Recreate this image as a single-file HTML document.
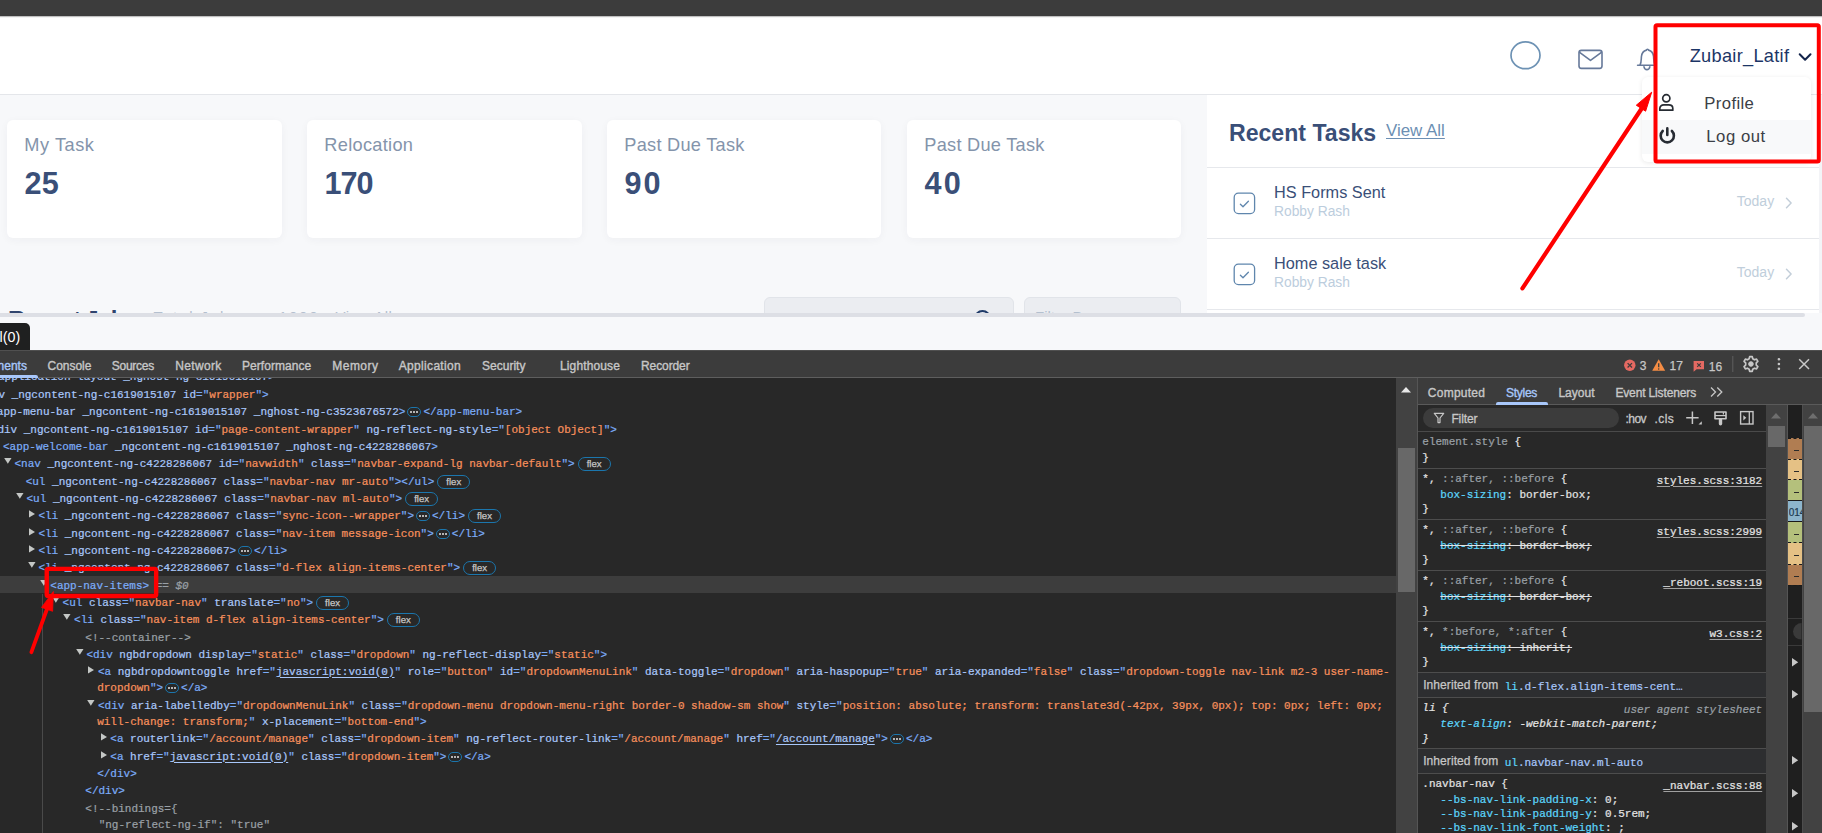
<!DOCTYPE html><html><head><meta charset="utf-8"><title>recreation</title><style>
*{box-sizing:border-box}
html,body{margin:0;padding:0}
body{width:1822px;height:833px;overflow:hidden;position:relative;background:#f7f8fa;font-family:"Liberation Sans",sans-serif}
.abs{position:absolute}
#page{position:absolute;left:0;top:0;width:1822px;height:350px;overflow:hidden;background:#f7f8fa}
#dt{position:absolute;left:0;top:350px;width:1822px;height:483px;overflow:hidden;background:#282828}
.card{position:absolute;top:120px;height:118px;background:#fff;border-radius:6px;box-shadow:0 2px 8px rgba(40,50,80,.045)}
.t{color:#7cacf8}.n{color:#a8c7fa}.v{color:#f8905c}.c{color:#9aa0a6}.w{color:#e3e3e3}
.u{text-decoration:underline;text-decoration-thickness:1px;text-underline-offset:1.5px}
.sl .u{text-decoration-color:#a0a0a0}
.dl{position:absolute;white-space:pre;font:400 11px/17px "Liberation Mono",monospace;color:#7cacf8;height:17px;-webkit-text-stroke:0.22px currentColor;letter-spacing:-0.012px}
.fx{display:inline-block;vertical-align:top;margin:1.5px 0 0 3px;height:14px;width:33px;border:1px solid #1b76ad;border-radius:7px;-webkit-text-stroke:0.25px currentColor;letter-spacing:0.35px;font:400 9.6px/12.5px "Liberation Sans",sans-serif;color:#c7c7c7;text-align:center;letter-spacing:0}
.el{display:inline-block;vertical-align:top;margin:3px 2px 0 2px;height:10px;width:14px;border:1px solid #1b76ad;border-radius:5px;position:relative}
.el:before{content:"";position:absolute;left:2px;top:3px;width:2px;height:2px;border-radius:1px;background:#e3e3e3;box-shadow:3px 0 0 #e3e3e3,6px 0 0 #e3e3e3}
.sl{position:absolute;white-space:pre;font:400 11px/15px "Liberation Mono",monospace;color:#e3e3e3;height:15px;-webkit-text-stroke:0.22px currentColor;letter-spacing:-0.012px}
.p{color:#5cd5fb}.g{color:#9aa0a6}
.st{text-decoration:line-through;text-decoration-color:#e3e3e3}
.tab{position:absolute;top:0;height:27px;font:400 12px/32px "Liberation Sans",sans-serif;color:#d0d0d0;white-space:pre;-webkit-text-stroke:0.36px currentColor}
</style></head><body>
<div id="page">
<div style="position:absolute;left:0px;top:0px;width:1822px;height:15.5px;background:#3c3c3c;box-shadow:0 1px 1px rgba(0,0,0,.25);z-index:3;"></div>
<div style="position:absolute;left:0px;top:15px;width:1822px;height:79.5px;background:#fff;border-bottom:1px solid #e4e6ea;"></div>
<div class="card" style="left:7px;width:275px"></div>
<div style="position:absolute;top:131.50px;left:24.30px;font:400 18.2px/26px 'Liberation Sans', sans-serif;color:#8494ab;white-space:pre;letter-spacing:0.546px;">My Task</div>
<div style="position:absolute;top:162.90px;left:24.60px;font:700 30.6px/40px 'Liberation Sans', sans-serif;color:#3a4f78;white-space:pre;letter-spacing:0.134px;">25</div>
<div class="card" style="left:307px;width:275px"></div>
<div style="position:absolute;top:131.50px;left:324.30px;font:400 18.2px/26px 'Liberation Sans', sans-serif;color:#8494ab;white-space:pre;letter-spacing:0.305px;">Relocation</div>
<div style="position:absolute;top:162.90px;left:324.60px;font:700 30.6px/40px 'Liberation Sans', sans-serif;color:#3a4f78;white-space:pre;letter-spacing:-1.016px;">170</div>
<div class="card" style="left:607px;width:274px"></div>
<div style="position:absolute;top:131.50px;left:624.30px;font:400 18.2px/26px 'Liberation Sans', sans-serif;color:#8494ab;white-space:pre;letter-spacing:0.266px;">Past Due Task</div>
<div style="position:absolute;top:162.90px;left:624.60px;font:700 30.6px/40px 'Liberation Sans', sans-serif;color:#3a4f78;white-space:pre;letter-spacing:1.984px;">90</div>
<div class="card" style="left:907px;width:274px"></div>
<div style="position:absolute;top:131.50px;left:924.30px;font:400 18.2px/26px 'Liberation Sans', sans-serif;color:#8494ab;white-space:pre;letter-spacing:0.266px;">Past Due Task</div>
<div style="position:absolute;top:162.90px;left:924.60px;font:700 30.6px/40px 'Liberation Sans', sans-serif;color:#3a4f78;white-space:pre;letter-spacing:2.084px;">40</div>
<div style="position:absolute;left:764px;top:297px;width:250px;height:30px;background:#ebedf1;border:1px solid #e1e4e9;border-radius:6px;"></div>
<div style="position:absolute;left:1024px;top:297px;width:157px;height:30px;background:#ebedf1;border:1px solid #e1e4e9;border-radius:6px;"></div>
<div class="abs" style="left:974px;top:309.8px;width:17px;height:17px;border:2px solid #1f3a68;border-radius:50%"></div>
<div style="position:absolute;top:306.60px;left:1035.00px;font:400 15px/20px 'Liberation Sans', sans-serif;color:#b4c0cf;white-space:pre;">Filter By</div>
<div style="position:absolute;top:306.20px;left:8.00px;font:700 24px/28px 'Liberation Sans', sans-serif;color:#2f446e;white-space:pre;letter-spacing:-1.338px;">Recent Jobs</div>
<div style="position:absolute;top:306.80px;left:153.50px;font:400 15px/20px 'Liberation Sans', sans-serif;color:#b4c0cf;white-space:pre;letter-spacing:1.846px;">Total Jobs are 1000</div>
<div style="position:absolute;top:306.80px;left:335.50px;font:400 15px/20px 'Liberation Sans', sans-serif;color:#b4c0cf;white-space:pre;letter-spacing:0.592px;">View All</div>
<div style="position:absolute;left:1207px;top:95px;width:615px;height:222px;background:#fff;"></div>
<div style="position:absolute;top:117.50px;left:1229.00px;font:700 23.1px/30px 'Liberation Sans', sans-serif;color:#3a4f78;white-space:pre;">Recent Tasks</div>
<div style="position:absolute;top:119.50px;left:1386.00px;font:400 16.9px/22px 'Liberation Sans', sans-serif;color:#6c8fb3;white-space:pre;text-decoration:underline;text-decoration-thickness:1px;text-underline-offset:2px;">View All</div>
<div style="position:absolute;left:1207px;top:167px;width:612px;height:1.3px;background:#e6e8ec;"></div>
<div style="position:absolute;left:1207px;top:238px;width:612px;height:1.3px;background:#e6e8ec;"></div>
<div style="position:absolute;left:1207px;top:309px;width:612px;height:1.3px;background:#e6e8ec;"></div>
<svg class="abs" style="left:1233.300px;top:191.6px" width="24" height="24" viewBox="0 0 24 24" fill="none" stroke="#5f86ad" stroke-width="1.3" stroke-linecap="round" stroke-linejoin="round"><rect x="1.200" y="1.200" width="20.400" height="20.400" rx="4.200"/><path d="M7.400 12.200l2.600 2.600 5.400-5.600"/></svg>
<div style="position:absolute;top:180.80px;left:1274.00px;font:400 16.3px/22px 'Liberation Sans', sans-serif;color:#3a4f78;white-space:pre;">HS Forms Sent</div>
<div style="position:absolute;top:202.90px;left:1274.00px;font:400 13.8px/18px 'Liberation Sans', sans-serif;color:#bccddd;white-space:pre;">Robby Rash</div>
<div style="position:absolute;top:192.30px;left:1736.80px;font:400 14px/18px 'Liberation Sans', sans-serif;color:#c0cedb;white-space:pre;">Today</div>
<svg class="abs" style="left:1783.6px;top:196.4px" width="10" height="14" viewBox="0 0 10 14" fill="none" stroke="#c3ced9" stroke-width="1.5" stroke-linecap="round" stroke-linejoin="round"><path d="M2.5 2.2l4.6 4.8-4.6 4.8"/></svg>
<svg class="abs" style="left:1233.300px;top:262.6px" width="24" height="24" viewBox="0 0 24 24" fill="none" stroke="#5f86ad" stroke-width="1.3" stroke-linecap="round" stroke-linejoin="round"><rect x="1.200" y="1.200" width="20.400" height="20.400" rx="4.200"/><path d="M7.400 12.200l2.600 2.600 5.400-5.600"/></svg>
<div style="position:absolute;top:251.80px;left:1274.00px;font:400 16.3px/22px 'Liberation Sans', sans-serif;color:#3a4f78;white-space:pre;">Home sale task</div>
<div style="position:absolute;top:273.90px;left:1274.00px;font:400 13.8px/18px 'Liberation Sans', sans-serif;color:#bccddd;white-space:pre;">Robby Rash</div>
<div style="position:absolute;top:263.30px;left:1736.80px;font:400 14px/18px 'Liberation Sans', sans-serif;color:#c0cedb;white-space:pre;">Today</div>
<svg class="abs" style="left:1783.6px;top:267.4px" width="10" height="14" viewBox="0 0 10 14" fill="none" stroke="#c3ced9" stroke-width="1.5" stroke-linecap="round" stroke-linejoin="round"><path d="M2.5 2.2l4.6 4.8-4.6 4.8"/></svg>
<div style="position:absolute;left:1819px;top:95px;width:3px;height:218px;background:#f3f4f7;"></div>
<div style="position:absolute;left:0px;top:312.6px;width:1822px;height:37.4px;background:#f7f8fa;"></div>
<div style="position:absolute;left:-6px;top:313px;width:1811px;height:4px;background:#dddfe5;border-radius:2px;"></div>
<div style="position:absolute;left:0px;top:323px;width:30px;height:28px;background:#1f2020;border-top-right-radius:5px;"></div>
<div style="position:absolute;top:327.50px;left:-0.50px;font:400 14.3px/18px 'Liberation Sans', sans-serif;color:#fff;white-space:pre;">l(0)</div>
<svg class="abs" style="left:1500px;top:30px" width="190" height="60" viewBox="0 0 190 60" fill="none" stroke-linecap="round" stroke-linejoin="round"><ellipse cx="25.5" cy="25.3" rx="14.5" ry="13.4" stroke="#6d92b4" stroke-width="1.7"/><g stroke="#66799a" stroke-width="1.6"><rect x="79" y="20.4" width="23" height="18" rx="2.3"/><path d="M79.6 22.4l10.9 8 10.9-8"/></g><g stroke="#66799a" stroke-width="1.6"><path d="M137.6 35.2h17.6M140 35.2c1.4-2.6 1.2-5 1.4-8.4.3-3.6 2.2-6 5-6.7.2-1.2 2-1.2 2.2 0 2.8.7 4.7 3.1 5 6.7.2 3.400 0 5.800 1.400 8.400"/><path d="M144 36.800c.4 1.800 1.400 2.800 2.900 2.800s2.500-1 2.900-2.800"/></g></svg>
<div style="position:absolute;left:1642px;top:77px;width:169px;height:84.5px;background:#fff;border-radius:6px;box-shadow:0 1px 5px rgba(0,0,0,.09);"></div>
<div style="position:absolute;left:1642px;top:120px;width:169px;height:34px;background:#f8f9fa;"></div>
<div style="position:absolute;top:42.90px;left:1689.70px;font:400 18.2px/26px 'Liberation Sans', sans-serif;color:#1c3566;white-space:pre;letter-spacing:0.296px;">Zubair_Latif</div>
<svg class="abs" style="left:1796px;top:50px" width="18" height="14" viewBox="0 0 18 14" fill="none" stroke="#13244b" stroke-width="2" stroke-linecap="round" stroke-linejoin="round"><path d="M3.7 4.3l5.4 5.400 5.400-5.400"/></svg>
<div style="position:absolute;top:92.00px;left:1704.30px;font:400 16.7px/24px 'Liberation Sans', sans-serif;color:#3b4046;white-space:pre;letter-spacing:0.384px;">Profile</div>
<div style="position:absolute;top:125.00px;left:1706.30px;font:400 16.7px/24px 'Liberation Sans', sans-serif;color:#3b4046;white-space:pre;letter-spacing:0.545px;">Log out</div>
<svg class="abs" style="left:1657px;top:92px" width="20" height="54" viewBox="0 0 20 54" fill="none" stroke="#272c33" stroke-linecap="round" stroke-linejoin="round"><circle cx="9.3" cy="6.300" r="3.6" stroke-width="1.700"/><path d="M2.800 18.2v-1.700c0-2.200 1.800-3.600 4-3.600h5c2.200 0 4 1.400 4 3.600v1.700z" stroke-width="1.700"/><path d="M10.300 36.400v6.600" stroke-width="2.600"/><path d="M5.700 39a6.600 6.600 0 1 0 9.200 0" stroke-width="2.600"/></svg>
</div>
<div id="dt">
<div style="position:absolute;left:0px;top:0px;width:1822px;height:28px;background:#3c3c3c;border-bottom:1px solid #5e5e5e;border-top:1px solid #505050;"></div>
<div class="tab" style="left:-2.5px;color:#a8c7fa;letter-spacing:0.028px">nents</div>
<div class="tab" style="left:47.6px;color:#c7c7c7;letter-spacing:-0.033px">Console</div>
<div class="tab" style="left:111.8px;color:#c7c7c7;letter-spacing:-0.262px">Sources</div>
<div class="tab" style="left:175.2px;color:#c7c7c7;letter-spacing:0.355px">Network</div>
<div class="tab" style="left:242px;color:#c7c7c7;letter-spacing:0.045px">Performance</div>
<div class="tab" style="left:332.3px;color:#c7c7c7;letter-spacing:0.459px">Memory</div>
<div class="tab" style="left:398.8px;color:#c7c7c7;letter-spacing:0.316px">Application</div>
<div class="tab" style="left:482px;color:#c7c7c7;letter-spacing:0.018px">Security</div>
<div class="tab" style="left:560px;color:#c7c7c7;letter-spacing:0.128px">Lighthouse</div>
<div class="tab" style="left:641px;color:#c7c7c7;letter-spacing:-0.095px">Recorder</div>
<div style="position:absolute;left:-4px;top:25px;width:41.5px;height:3px;background:#a8c7fa;border-radius:2px 2px 0 0;"></div>
<div class="abs" style="left:0;top:28px;width:1395.700px;height:455px;overflow:hidden;background:#282828">
<div class="abs" style="left:0;top:197.70px;width:1397px;height:17.3px;background:#3d3d3d"></div>
<div class="abs" style="left:42px;top:216.40px;width:1px;height:260px;background:#4a4a4a"></div>
<div class="dl" style="left:-2.00px;top:-9.40px"><span class="n">application-layout</span> <span class="n">_nghost-ng-c1619015107</span>&gt;</div>
<div class="dl" style="left:-1.60px;top:8.60px"><span class="n">v</span> <span class="n">_ngcontent-ng-c1619015107</span> <span class="n">id</span>="<span class="v">wrapper</span>"&gt;</div>
<div class="dl" style="left:-3.20px;top:25.60px"><span class="n">app-menu-bar</span> <span class="n">_ngcontent-ng-c1619015107</span> <span class="n">_nghost-ng-c3523676572</span>&gt;<span class="el"></span><span class="t">&lt;/app-menu-bar&gt;</span></div>
<div class="dl" style="left:-2.60px;top:43.60px"><span class="n">div</span> <span class="n">_ngcontent-ng-c1619015107</span> <span class="n">id</span>="<span class="v">page-content-wrapper</span>" <span class="n">ng-reflect-ng-style</span>="<span class="v">[object Object]</span>"&gt;</div>
<div class="dl" style="left:3.00px;top:60.60px"><span class="t">&lt;app-welcome-bar</span> <span class="n">_ngcontent-ng-c1619015107</span> <span class="n">_nghost-ng-c4228286067</span>&gt;</div>
<div class="dl" style="left:14.50px;top:77.60px"><span class="t">&lt;nav</span> <span class="n">_ngcontent-ng-c4228286067</span> <span class="n">id</span>="<span class="v">navwidth</span>" <span class="n">class</span>="<span class="v">navbar-expand-lg navbar-default</span>"&gt;<span class="fx">flex</span></div>
<svg class="abs" style="left:3.80px;top:79.80px" width="8" height="6" viewBox="0 0 8 6"><path d="M0.200 0h7.300L3.850 5.800z" fill="#c4c7c5"/></svg>
<div class="dl" style="left:25.70px;top:95.60px"><span class="t">&lt;ul</span> <span class="n">_ngcontent-ng-c4228286067</span> <span class="n">class</span>="<span class="v">navbar-nav mr-auto</span>"&gt;<span class="t">&lt;/ul</span>&gt;<span class="fx">flex</span></div>
<div class="dl" style="left:26.50px;top:112.60px"><span class="t">&lt;ul</span> <span class="n">_ngcontent-ng-c4228286067</span> <span class="n">class</span>="<span class="v">navbar-nav ml-auto</span>"&gt;<span class="fx">flex</span></div>
<svg class="abs" style="left:15.80px;top:114.80px" width="8" height="6" viewBox="0 0 8 6"><path d="M0.200 0h7.300L3.850 5.800z" fill="#c4c7c5"/></svg>
<div class="dl" style="left:38.40px;top:129.60px"><span class="t">&lt;li</span> <span class="n">_ngcontent-ng-c4228286067</span> <span class="n">class</span>="<span class="v">sync-icon--wrapper</span>"&gt;<span class="el"></span><span class="t">&lt;/li&gt;</span><span class="fx">flex</span></div>
<svg class="abs" style="left:28.80px;top:132.40px" width="7" height="8" viewBox="0 0 7 8"><path d="M0 0.200v7.400L6 3.900z" fill="#c4c7c5"/></svg>
<div class="dl" style="left:38.40px;top:147.60px"><span class="t">&lt;li</span> <span class="n">_ngcontent-ng-c4228286067</span> <span class="n">class</span>="<span class="v">nav-item message-icon</span>"&gt;<span class="el"></span><span class="t">&lt;/li&gt;</span></div>
<svg class="abs" style="left:28.80px;top:150.40px" width="7" height="8" viewBox="0 0 7 8"><path d="M0 0.200v7.400L6 3.900z" fill="#c4c7c5"/></svg>
<div class="dl" style="left:38.40px;top:164.60px"><span class="t">&lt;li</span> <span class="n">_ngcontent-ng-c4228286067</span>&gt;<span class="el"></span><span class="t">&lt;/li&gt;</span></div>
<svg class="abs" style="left:28.80px;top:167.40px" width="7" height="8" viewBox="0 0 7 8"><path d="M0 0.200v7.400L6 3.900z" fill="#c4c7c5"/></svg>
<div class="dl" style="left:38.40px;top:181.60px"><span class="t">&lt;li</span> <span class="n">_ngcontent-ng-c4228286067</span> <span class="n">class</span>="<span class="v">d-flex align-items-center</span>"&gt;<span class="fx">flex</span></div>
<svg class="abs" style="left:27.70px;top:183.80px" width="8" height="6" viewBox="0 0 8 6"><path d="M0.200 0h7.300L3.850 5.800z" fill="#c4c7c5"/></svg>
<div class="dl" style="left:50.30px;top:199.60px"><span class="t">&lt;app-nav-items</span>&gt;<span style="color:#9aa0a6"> == <i>$0</i></span></div>
<svg class="abs" style="left:39.60px;top:201.80px" width="8" height="6" viewBox="0 0 8 6"><path d="M0.200 0h7.300L3.850 5.800z" fill="#c4c7c5"/></svg>
<div class="dl" style="left:62.60px;top:216.60px"><span class="t">&lt;ul</span> <span class="n">class</span>="<span class="v">navbar-nav</span>" <span class="n">translate</span>="<span class="v">no</span>"&gt;<span class="fx">flex</span></div>
<svg class="abs" style="left:51.90px;top:218.80px" width="8" height="6" viewBox="0 0 8 6"><path d="M0.200 0h7.300L3.850 5.800z" fill="#c4c7c5"/></svg>
<div class="dl" style="left:74.10px;top:233.60px"><span class="t">&lt;li</span> <span class="n">class</span>="<span class="v">nav-item d-flex align-items-center</span>"&gt;<span class="fx">flex</span></div>
<svg class="abs" style="left:63.40px;top:235.80px" width="8" height="6" viewBox="0 0 8 6"><path d="M0.200 0h7.300L3.850 5.800z" fill="#c4c7c5"/></svg>
<div class="dl" style="left:85.30px;top:251.60px"><span class="c">&lt;!--container--&gt;</span></div>
<div class="dl" style="left:86.40px;top:268.60px"><span class="t">&lt;div</span> <span class="n">ngbdropdown</span> <span class="n">display</span>="<span class="v">static</span>" <span class="n">class</span>="<span class="v">dropdown</span>" <span class="n">ng-reflect-display</span>="<span class="v">static</span>"&gt;</div>
<svg class="abs" style="left:75.70px;top:270.80px" width="8" height="6" viewBox="0 0 8 6"><path d="M0.200 0h7.300L3.850 5.800z" fill="#c4c7c5"/></svg>
<div class="dl" style="left:98.00px;top:285.60px"><span class="t">&lt;a</span> <span class="n">ngbdropdowntoggle</span> <span class="n">href</span>="<span class="n u">javascript:void(0)</span>" <span class="n">role</span>="<span class="v">button</span>" <span class="n">id</span>="<span class="v">dropdownMenuLink</span>" <span class="n">data-toggle</span>="<span class="v">dropdown</span>" <span class="n">aria-haspopup</span>="<span class="v">true</span>" <span class="n">aria-expanded</span>="<span class="v">false</span>" <span class="n">class</span>="<span class="v">dropdown-toggle nav-link m2-3 user-name-</span></div>
<svg class="abs" style="left:88.40px;top:288.40px" width="7" height="8" viewBox="0 0 7 8"><path d="M0 0.200v7.400L6 3.900z" fill="#c4c7c5"/></svg>
<div class="dl" style="left:97.20px;top:301.60px"><span class="v">dropdown</span>"&gt;<span class="el"></span><span class="t">&lt;/a&gt;</span></div>
<div class="dl" style="left:98.00px;top:319.60px"><span class="t">&lt;div</span> <span class="n">aria-labelledby</span>="<span class="v">dropdownMenuLink</span>" <span class="n">class</span>="<span class="v">dropdown-menu dropdown-menu-right border-0 shadow-sm show</span>" <span class="n">style</span>="<span class="v">position: absolute; transform: translate3d(-42px, 39px, 0px); top: 0px; left: 0px;</span></div>
<svg class="abs" style="left:87.30px;top:321.80px" width="8" height="6" viewBox="0 0 8 6"><path d="M0.200 0h7.300L3.850 5.800z" fill="#c4c7c5"/></svg>
<div class="dl" style="left:97.20px;top:335.60px"><span class="v">will-change: transform;</span>" <span class="n">x-placement</span>="<span class="v">bottom-end</span>"&gt;</div>
<div class="dl" style="left:110.30px;top:352.60px"><span class="t">&lt;a</span> <span class="n">routerlink</span>="<span class="v">/account/manage</span>" <span class="n">class</span>="<span class="v">dropdown-item</span>" <span class="n">ng-reflect-router-link</span>="<span class="v">/account/manage</span>" <span class="n">href</span>="<span class="n u">/account/manage</span>"&gt;<span class="el"></span><span class="t">&lt;/a&gt;</span></div>
<svg class="abs" style="left:100.70px;top:355.40px" width="7" height="8" viewBox="0 0 7 8"><path d="M0 0.200v7.400L6 3.900z" fill="#c4c7c5"/></svg>
<div class="dl" style="left:110.30px;top:370.60px"><span class="t">&lt;a</span> <span class="n">href</span>="<span class="n u">javascript:void(0)</span>" <span class="n">class</span>="<span class="v">dropdown-item</span>"&gt;<span class="el"></span><span class="t">&lt;/a&gt;</span></div>
<svg class="abs" style="left:100.70px;top:373.40px" width="7" height="8" viewBox="0 0 7 8"><path d="M0 0.200v7.400L6 3.900z" fill="#c4c7c5"/></svg>
<div class="dl" style="left:97.20px;top:387.60px"><span class="t">&lt;/div</span>&gt;</div>
<div class="dl" style="left:85.30px;top:404.60px"><span class="t">&lt;/div</span>&gt;</div>
<div class="dl" style="left:85.30px;top:422.60px"><span class="c">&lt;!--bindings={</span></div>
<div class="dl" style="left:98.70px;top:438.60px"><span class="c">"ng-reflect-ng-if": "true"</span></div>
</div>
<svg class="abs" style="left:1620px;top:4px" width="200" height="22" viewBox="0 0 200 22" fill="none"><circle cx="9.800" cy="11.300" r="5.700" fill="#e46962"/><path d="M7.600 9.100l4.400 4.400M12 9.100l-4.400 4.400" stroke="#3c3c3c" stroke-width="1.300"/><path d="M38.700 5.300l6.500 11.400h-13z" fill="#f48c44"/><path d="M38.700 9.200v4" stroke="#3c3c3c" stroke-width="1.300"/><circle cx="38.700" cy="14.900" r=".75" fill="#3c3c3c"/><path d="M73.600 7h10.400v8.200h-7.400l-3 2.600z" fill="#e46962"/><path d="M77.200 9.300l3.600 3.600M80.800 9.300l-3.600 3.600" stroke="#3c3c3c" stroke-width="1.200"/><path d="M112.800 2v16" stroke="#5e5e5e" stroke-width="1"/><g transform="translate(130.950 10.000)" stroke="#c7c7c7" fill="none"><circle r="2.300" fill="#c7c7c7" stroke-width="1"/><path d="M-1.300 -7.300h2.600l.5 2.100 1.700 1 2.100-.7 1.300 2.300-1.600 1.500v2.200l1.600 1.500-1.300 2.300-2.100-.7-1.700 1-.5 2.100h-2.600l-.5-2.100-1.700-1-2.100.7-1.300-2.300 1.600-1.500v-2.200l-1.600-1.500 1.300-2.300 2.100.7 1.700-1z" stroke-width="1.700" stroke-linejoin="round"/></g><g fill="#c7c7c7"><circle cx="158.900" cy="5.200" r="1.300"/><circle cx="158.900" cy="10" r="1.300"/><circle cx="158.900" cy="14.800" r="1.300"/></g><path d="M179.200 5.200l9.800 9.800M189 5.200l-9.800 9.800" stroke="#c7c7c7" stroke-width="1.500"/></svg>
<div style="position:absolute;top:8.00px;left:1639.70px;font:400 12px/16px 'Liberation Sans', sans-serif;color:#c7c7c7;white-space:pre;-webkit-text-stroke:0.25px currentColor;">3</div>
<div style="position:absolute;top:8.00px;left:1669.50px;font:400 12px/16px 'Liberation Sans', sans-serif;color:#c7c7c7;white-space:pre;-webkit-text-stroke:0.25px currentColor;">17</div>
<div style="position:absolute;top:8.60px;left:1708.80px;font:400 12px/16px 'Liberation Sans', sans-serif;color:#c7c7c7;white-space:pre;-webkit-text-stroke:0.25px currentColor;">16</div>
<div style="position:absolute;left:1395.7px;top:28px;width:21px;height:455px;background:#424242;"></div>
<svg class="abs" style="left:1401.300px;top:36.8px" width="10" height="6" viewBox="0 0 10 6"><path d="M0 5.500L5 0l5 5.500z" fill="#e8e8e8"/></svg>
<div style="position:absolute;left:1398px;top:97.5px;width:17.2px;height:144px;background:#686868;"></div>
<div style="position:absolute;left:1416.7px;top:28px;width:1.3px;height:455px;background:#555;"></div>
<div style="position:absolute;left:1418px;top:28px;width:404px;height:455px;background:#282828;"></div>
<div style="position:absolute;left:1418px;top:28px;width:404px;height:26px;background:#3c3c3c;"></div>
<div style="position:absolute;left:1418px;top:54px;width:404px;height:1px;background:#5a5a5a;"></div>
<div class="tab" style="left:1427.8px;top:28px;height:26px;line-height:31px;color:#c7c7c7;letter-spacing:0.253px">Computed</div>
<div class="tab" style="left:1506px;top:28px;height:26px;line-height:31px;color:#a8c7fa;letter-spacing:-0.281px">Styles</div>
<div class="tab" style="left:1558.4px;top:28px;height:26px;line-height:31px;color:#c7c7c7;letter-spacing:0.011px">Layout</div>
<div class="tab" style="left:1615.4px;top:28px;height:26px;line-height:31px;color:#c7c7c7;letter-spacing:-0.141px">Event Listeners</div>
<svg class="abs" style="left:1709px;top:35.5px" width="16" height="12" viewBox="0 0 16 12" fill="none" stroke="#c7c7c7" stroke-width="1.300"><path d="M2 1.500l4.500 4.500-4.500 4.500M8.300 1.500l4.500 4.500-4.500 4.500"/></svg>
<div style="position:absolute;left:1496px;top:52px;width:52px;height:3px;background:#a8c7fa;border-radius:2px 2px 0 0;"></div>
<div style="position:absolute;left:1418px;top:81px;width:348px;height:1px;background:#4a4a4a;"></div>
<div style="position:absolute;left:1423px;top:58.30000000000001px;width:196px;height:20px;background:#3c3c3c;border-radius:10px;"></div>
<svg class="abs" style="left:1433px;top:62.3px" width="12" height="12" viewBox="0 0 12 12" fill="none" stroke="#c7c7c7" stroke-width="1.200" stroke-linejoin="round"><path d="M1.300 1.300h9.400L7 6v4.600H5V6z"/></svg>
<div style="position:absolute;top:60.90px;left:1451.40px;font:400 12px/16px 'Liberation Sans', sans-serif;color:#c7c7c7;white-space:pre;letter-spacing:-0.112px;-webkit-text-stroke:0.3px currentColor;">Filter</div>
<div style="position:absolute;top:60.50px;left:1625.50px;font:400 12px/16px 'Liberation Sans', sans-serif;color:#c7c7c7;white-space:pre;letter-spacing:-0.522px;-webkit-text-stroke:0.3px currentColor;">:hov</div>
<div style="position:absolute;top:60.50px;left:1654.60px;font:400 12px/16px 'Liberation Sans', sans-serif;color:#c7c7c7;white-space:pre;letter-spacing:0.350px;-webkit-text-stroke:0.3px currentColor;">.cls</div>
<svg class="abs" style="left:1684px;top:58.3px" width="74" height="20" viewBox="0 0 74 20" fill="none" stroke="#c7c7c7"><path d="M8.400 3.600v12.400M2.200 9.800h12.400" stroke-width="1.500"/><path d="M17.800 13.200v3.300h-3.300z" fill="#c7c7c7" stroke="none"/><path d="M31 4h11v6.800h-11z" stroke-width="1.600" stroke-linejoin="round"/><path d="M31 7.600h11" stroke-width="1.200"/><path d="M39.400 4.200v2.200" stroke-width="1.200"/><path d="M36.500 11.800v4" stroke-width="3.400" stroke-linecap="round"/><rect x="56.600" y="3.600" width="12.400" height="12.400" stroke-width="1.400"/><path d="M65.300 3.600v12.400" stroke-width="1.300"/><path d="M59.300 7.200l3 2.600-3 2.600z" fill="#c7c7c7" stroke="none"/></svg>
<div class="sl" style="left:1422.3px;top:84.60px;"><span class="g">element.style</span> {</div>
<div class="sl" style="left:1422.3px;top:100.60px;">}</div>
<div style="position:absolute;left:1418px;top:118px;width:348px;height:1px;background:#4d4d4d;"></div>
<div class="sl" style="left:1422.3px;top:121.60px;">*, <span class="g">::after, ::before</span> {</div>
<div class="sl" style="right:59.799999999999955px;top:123.60px;"><span class="u">styles.scss:3182</span></div>
<div class="sl" style="left:1440.3px;top:137.60px;"><span class="p">box-sizing</span>: border-box;</div>
<div class="sl" style="left:1422.3px;top:151.60px;">}</div>
<div style="position:absolute;left:1418px;top:169.39999999999998px;width:348px;height:1px;background:#4d4d4d;"></div>
<div class="sl" style="left:1422.3px;top:172.60px;">*, <span class="g">::after, ::before</span> {</div>
<div class="sl" style="right:59.799999999999955px;top:174.60px;"><span class="u">styles.scss:2999</span></div>
<div class="sl" style="left:1440.3px;top:188.60px;"><span class="st"><span class="p">box-sizing</span>: border-box;</span></div>
<div class="sl" style="left:1422.3px;top:202.60px;">}</div>
<div style="position:absolute;left:1418px;top:220.20000000000005px;width:348px;height:1px;background:#4d4d4d;"></div>
<div class="sl" style="left:1422.3px;top:223.60px;">*, <span class="g">::after, ::before</span> {</div>
<div class="sl" style="right:59.799999999999955px;top:225.60px;"><span class="u">_reboot.scss:19</span></div>
<div class="sl" style="left:1440.3px;top:239.60px;"><span class="st"><span class="p">box-sizing</span>: border-box;</span></div>
<div class="sl" style="left:1422.3px;top:253.60px;">}</div>
<div style="position:absolute;left:1418px;top:271.1px;width:348px;height:1px;background:#4d4d4d;"></div>
<div class="sl" style="left:1422.3px;top:274.60px;">*, <span class="g">*:before, *:after</span> {</div>
<div class="sl" style="right:59.799999999999955px;top:276.60px;"><span class="u">w3.css:2</span></div>
<div class="sl" style="left:1440.3px;top:290.60px;"><span class="st"><span class="p">box-sizing</span>: inherit;</span></div>
<div class="sl" style="left:1422.3px;top:304.60px;">}</div>
<div style="position:absolute;left:1418px;top:322.29999999999995px;width:348px;height:1px;background:#4d4d4d;"></div>
<div style="position:absolute;left:1418px;top:323.29999999999995px;width:348px;height:24px;background:#2d2e30;"></div>
<div style="position:absolute;top:326.60px;left:1423.20px;font:400 12px/16px 'Liberation Sans', sans-serif;color:#c7c7c7;white-space:pre;letter-spacing:0.082px;-webkit-text-stroke:0.25px currentColor;">Inherited from</div>
<div class="sl" style="left:1504.7px;top:329.60px;"><span class="p">li</span><span class="n">.d-flex.align-items-cent…</span></div>
<div style="position:absolute;left:1418px;top:347.20000000000005px;width:348px;height:1px;background:#4d4d4d;"></div>
<div class="sl" style="left:1422.3px;top:350.60px;"><i>li {</i></div>
<div class="sl" style="right:59.799999999999955px;top:352.60px;"><i class="g">user agent stylesheet</i></div>
<div class="sl" style="left:1440.3px;top:366.60px;"><i><span class="p">text-align</span>: -webkit-match-parent;</i></div>
<div class="sl" style="left:1422.3px;top:381.60px;"><i>}</i></div>
<div style="position:absolute;left:1418px;top:398.4px;width:348px;height:1px;background:#4d4d4d;"></div>
<div style="position:absolute;left:1418px;top:399.4px;width:348px;height:24px;background:#2d2e30;"></div>
<div style="position:absolute;top:402.50px;left:1423.20px;font:400 12px/16px 'Liberation Sans', sans-serif;color:#c7c7c7;white-space:pre;letter-spacing:0.082px;-webkit-text-stroke:0.25px currentColor;">Inherited from</div>
<div class="sl" style="left:1504.7px;top:405.60px;"><span class="p">ul</span><span class="n">.navbar-nav.ml-auto</span></div>
<div style="position:absolute;left:1418px;top:423.4px;width:348px;height:1px;background:#4d4d4d;"></div>
<div class="sl" style="left:1422.3px;top:426.60px;">.navbar-nav {</div>
<div class="sl" style="right:59.799999999999955px;top:428.60px;"><span class="u">_navbar.scss:88</span></div>
<div class="sl" style="left:1440.3px;top:442.60px;"><span class="p">--bs-nav-link-padding-x</span>: 0;</div>
<div class="sl" style="left:1440.3px;top:456.60px;"><span class="p">--bs-nav-link-padding-y</span>: 0.5rem;</div>
<div class="sl" style="left:1440.3px;top:470.60px;"><span class="p">--bs-nav-link-font-weight</span>: ;</div>
<div style="position:absolute;left:1766px;top:55px;width:21.3px;height:428px;background:#424242;"></div>
<svg class="abs" style="left:1771.300px;top:63.4px" width="10" height="6" viewBox="0 0 10 6"><path d="M0 5.500L5 0l5 5.500z" fill="#6e6e6e"/></svg>
<div style="position:absolute;left:1768.2px;top:76px;width:16.8px;height:21px;background:#686868;"></div>
<div style="position:absolute;left:1787px;top:55px;width:15.2px;height:428px;background:#1f1f1f;border-left:1px solid #555;"></div>
<div style="position:absolute;left:1788px;top:75px;width:13.5px;height:13.399999999999977px;background:#1f1f1f;"></div>
<div style="position:absolute;left:1788px;top:88.39999999999998px;width:13.5px;height:20.900000000000034px;background:#b07d52;"></div>
<div style="position:absolute;left:1794px;top:100.05000000000003px;width:4.6px;height:1.3px;background:#2a2a2a;"></div>
<div style="position:absolute;left:1788px;top:109.30000000000001px;width:13.5px;height:20.69999999999999px;background:#e5c185;"></div>
<div style="position:absolute;left:1794px;top:120.84999999999998px;width:4.6px;height:1.3px;background:#2a2a2a;"></div>
<div style="position:absolute;left:1788px;top:130px;width:13.5px;height:21px;background:#b4c07c;"></div>
<div style="position:absolute;left:1794px;top:141.7px;width:4.6px;height:1.3px;background:#2a2a2a;"></div>
<div style="position:absolute;left:1788px;top:151px;width:13.5px;height:21px;background:#8db5cc;"></div>
<div style="position:absolute;left:1788px;top:172px;width:13.5px;height:20.799999999999955px;background:#b4c07c;"></div>
<div style="position:absolute;left:1794px;top:183.59999999999997px;width:4.6px;height:1.3px;background:#2a2a2a;"></div>
<div style="position:absolute;left:1788px;top:192.79999999999995px;width:13.5px;height:22.0px;background:#e5c185;"></div>
<div style="position:absolute;left:1794px;top:204.99999999999994px;width:4.6px;height:1.3px;background:#2a2a2a;"></div>
<div style="position:absolute;left:1788px;top:214.79999999999995px;width:13.5px;height:20.40000000000009px;background:#b07d52;"></div>
<div style="position:absolute;left:1794px;top:226.2px;width:4.6px;height:1.3px;background:#2a2a2a;"></div>
<div style="position:absolute;left:1788px;top:87.79999999999998px;width:13.5px;height:1.2px;background:transparent;border-top:1.200px dashed #1a1a1a;"></div>
<div style="position:absolute;left:1788px;top:108.70000000000002px;width:13.5px;height:1.2px;background:transparent;border-top:1.200px dashed #1a1a1a;"></div>
<div style="position:absolute;left:1788px;top:129.4px;width:13.5px;height:1.2px;background:transparent;border-top:1.200px dashed #1a1a1a;"></div>
<div style="position:absolute;left:1788px;top:150.4px;width:13.5px;height:1.2px;background:transparent;border-top:1.200px solid #1a1a1a;"></div>
<div style="position:absolute;left:1788px;top:171.4px;width:13.5px;height:1.2px;background:transparent;border-top:1.200px solid #1a1a1a;"></div>
<div style="position:absolute;left:1788px;top:192.19999999999996px;width:13.5px;height:1.2px;background:transparent;border-top:1.200px dashed #1a1a1a;"></div>
<div style="position:absolute;left:1788px;top:214.19999999999996px;width:13.5px;height:1.2px;background:transparent;border-top:1.200px dashed #1a1a1a;"></div>
<div style="position:absolute;left:1788px;top:234.60000000000005px;width:13.5px;height:1.2px;background:transparent;border-top:1.200px dashed #1a1a1a;"></div>
<div style="position:absolute;top:156.70px;left:1788.70px;font:400 10px/12px 'Liberation Sans', sans-serif;color:#1c3a50;white-space:pre;overflow:hidden;width:13.300px;-webkit-text-stroke:0.2px currentColor;">014</div>
<div style="position:absolute;left:1788px;top:268px;width:13.5px;height:1px;background:#3a3a3a;"></div>
<div style="position:absolute;left:1788px;top:295.4px;width:13.5px;height:1px;background:#3a3a3a;"></div>
<div class="abs" style="left:1792.500px;top:272.5px;width:18px;height:17px;border-radius:50%;background:#3a3a3a;clip-path:inset(0 9px 0 0)"></div>
<svg class="abs" style="left:1792.400px;top:307.6px" width="7" height="9" viewBox="0 0 7 9"><path d="M0 0v8.400L6.200 4.200z" fill="#c7c7c7"/></svg>
<svg class="abs" style="left:1792.400px;top:340.2px" width="7" height="9" viewBox="0 0 7 9"><path d="M0 0v8.400L6.200 4.200z" fill="#c7c7c7"/></svg>
<svg class="abs" style="left:1792.400px;top:406.0px" width="7" height="9" viewBox="0 0 7 9"><path d="M0 0v8.400L6.200 4.200z" fill="#c7c7c7"/></svg>
<svg class="abs" style="left:1792.400px;top:439.1px" width="7" height="9" viewBox="0 0 7 9"><path d="M0 0v8.400L6.200 4.200z" fill="#c7c7c7"/></svg>
<svg class="abs" style="left:1792.400px;top:472.0px" width="7" height="9" viewBox="0 0 7 9"><path d="M0 0v8.400L6.200 4.200z" fill="#c7c7c7"/></svg>
<div style="position:absolute;left:1802px;top:55px;width:20px;height:428px;background:#424242;border-left:1px solid #4d4d4d;"></div>
<svg class="abs" style="left:1807.600px;top:63.4px" width="10" height="6" viewBox="0 0 10 6"><path d="M0 5.500L5 0l5 5.500z" fill="#6e6e6e"/></svg>
<div style="position:absolute;left:1804px;top:76px;width:17.5px;height:286px;background:#686868;"></div>
</div>
<svg class="abs" style="left:0;top:0;z-index:10" width="1822" height="833" viewBox="0 0 1822 833" fill="none"><rect x="1655.500" y="25.300" width="163.300" height="136.200" rx="1.5" stroke="#ff0000" stroke-width="4"/><path d="M1522.400 288.400L1644 105" stroke="#ff0000" stroke-width="4.200" stroke-linecap="round"/><path d="M1651.700 92.200L1636.300 105.200L1645.600 111.200Z" fill="#ff0000" stroke="#ff0000" stroke-width="1" stroke-linejoin="round"/><rect x="46.750" y="568.850" width="109.400" height="27.200" rx="1.500" stroke="#ff0000" stroke-width="4.400"/><path d="M31.400 652.200L47 609" stroke="#ff0000" stroke-width="3.800" stroke-linecap="round"/><path d="M53.400 591.500L41.500 607.400L52.600 611.300Z" fill="#ff0000" stroke="#ff0000" stroke-width="0.800" stroke-linejoin="round"/></svg>
</body></html>
